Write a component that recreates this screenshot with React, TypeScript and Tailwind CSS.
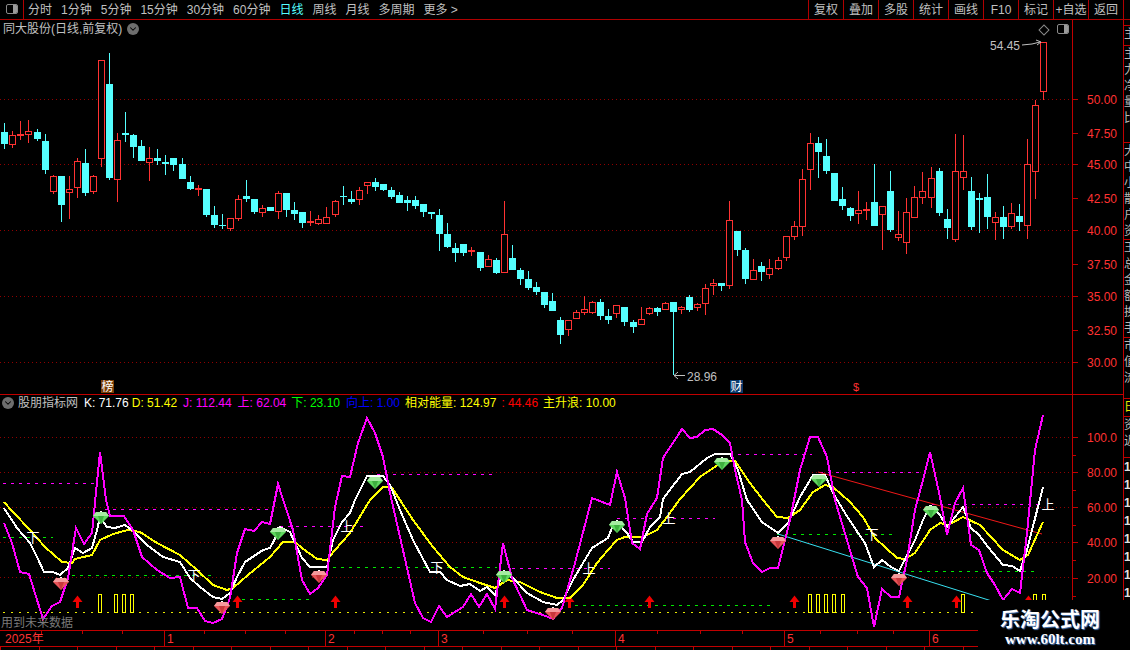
import { ChevronDown } from 'lucide-react';

// [high, bodyTop, bodyBottom, low, red?1:0], page pixels, one entry per trading day
const candles: number[][] = [
  [123, 132, 144, 149, 0], [131, 135, 145, 148, 1], [121, 134, 136, 140, 1], [120, 131, 135, 143, 1],
  [129, 132, 139, 141, 0], [134, 141, 170, 174, 0], [175, 176, 192, 194, 1], [176, 176, 205, 222, 0],
  [176, 189, 193, 219, 1], [158, 161, 188, 198, 1], [149, 163, 193, 196, 0], [175, 176, 192, 194, 1],
  [60, 60, 159, 167, 1], [53, 84, 178, 180, 0], [133, 140, 180, 202, 1], [112, 133, 135, 142, 0],
  [134, 135, 147, 158, 0], [140, 146, 161, 161, 0], [147, 158, 163, 181, 1], [149, 158, 161, 165, 0],
  [155, 162, 164, 175, 0], [158, 158, 165, 171, 0], [158, 164, 179, 179, 0], [176, 182, 189, 190, 0],
  [185, 188, 190, 196, 1], [189, 189, 215, 217, 0], [206, 215, 225, 228, 0], [214, 225, 226, 229, 0],
  [218, 218, 229, 231, 1], [195, 199, 219, 221, 1], [180, 196, 199, 202, 0], [199, 199, 212, 214, 0],
  [205, 208, 213, 217, 1], [207, 207, 211, 211, 0], [191, 193, 212, 219, 1], [193, 193, 210, 217, 0],
  [202, 210, 214, 220, 0], [212, 212, 223, 228, 0], [211, 221, 223, 226, 1], [215, 219, 224, 225, 1],
  [207, 217, 224, 224, 1], [200, 201, 215, 217, 1], [186, 196, 197, 205, 0], [191, 199, 202, 204, 0],
  [187, 190, 200, 205, 1], [182, 182, 186, 194, 1], [178, 182, 187, 191, 0], [184, 184, 190, 191, 0],
  [187, 190, 197, 199, 0], [192, 195, 203, 203, 0], [196, 200, 203, 211, 0], [196, 200, 206, 209, 0],
  [204, 204, 212, 217, 0], [212, 212, 214, 219, 0], [209, 215, 234, 251, 0], [223, 234, 247, 248, 0],
  [243, 248, 253, 262, 0], [244, 244, 253, 256, 0], [247, 250, 252, 256, 1], [252, 252, 268, 271, 0],
  [255, 259, 267, 267, 1], [258, 260, 273, 274, 0], [201, 234, 273, 273, 1], [245, 258, 270, 270, 0],
  [268, 270, 279, 285, 0], [271, 279, 288, 290, 0], [282, 287, 292, 295, 0], [292, 292, 305, 308, 0],
  [293, 301, 311, 311, 0], [317, 320, 335, 344, 0], [320, 320, 330, 336, 1], [310, 312, 319, 319, 1],
  [296, 309, 313, 315, 1], [301, 302, 313, 314, 1], [299, 302, 316, 320, 0], [309, 316, 320, 324, 0],
  [305, 305, 314, 318, 1], [307, 307, 322, 326, 0], [320, 322, 327, 333, 0], [307, 319, 325, 325, 1],
  [307, 308, 314, 315, 1], [307, 308, 312, 316, 0], [302, 303, 310, 310, 1], [302, 302, 312, 375, 0],
  [306, 307, 310, 314, 1], [295, 297, 310, 312, 0], [303, 304, 308, 311, 1], [284, 288, 304, 315, 1],
  [279, 283, 286, 295, 1], [283, 283, 286, 291, 0], [201, 220, 286, 289, 1], [231, 231, 250, 256, 0],
  [248, 250, 279, 284, 0], [259, 270, 280, 280, 1], [262, 266, 272, 281, 0], [259, 268, 275, 279, 1],
  [257, 260, 269, 270, 1], [236, 236, 258, 261, 1], [221, 226, 237, 240, 1], [169, 179, 227, 236, 1],
  [133, 143, 170, 190, 1], [137, 143, 152, 178, 0], [139, 156, 171, 174, 0], [173, 173, 201, 201, 0],
  [187, 199, 206, 210, 0], [207, 208, 216, 221, 0], [191, 210, 214, 224, 1], [202, 209, 211, 220, 1],
  [164, 202, 226, 226, 0], [206, 206, 215, 250, 1], [171, 191, 230, 232, 0], [211, 234, 238, 241, 1],
  [198, 212, 243, 254, 1], [186, 197, 218, 218, 1], [172, 191, 198, 204, 1], [167, 178, 198, 208, 1],
  [168, 171, 213, 216, 0], [209, 219, 228, 239, 0], [134, 171, 240, 242, 1], [135, 171, 178, 190, 1],
  [177, 191, 227, 230, 0], [193, 198, 200, 233, 0], [174, 197, 217, 229, 0], [212, 217, 223, 240, 1],
  [206, 217, 227, 239, 0], [203, 213, 227, 229, 1], [204, 216, 222, 231, 0], [139, 164, 226, 239, 1],
  [100, 105, 172, 199, 1], [42, 42, 92, 100, 1],
];

const linePoints = {
  j: '4,523 12,543 20,572 29,574 43,619 52,606 60,602 68,578 76,528 84,544 92,533 100,452 106,500 110,516 124,516 133,530 142,557 157,570 170,578 180,577 188,608 197,608 205,621 213,623 222,619 230,598 237,553 245,529 254,531 262,522 270,524 278,484 293,530 302,580 310,594 318,588 327,575 335,507 342,476 350,477 358,443 367,418 375,433 383,457 390,493 400,537 415,603 423,618 431,622 439,606 447,617 463,607 471,594 479,607 487,594 495,609 503,543 512,578 527,610 543,615 553,619 562,608 575,563 592,498 610,505 617,472 625,498 632,543 640,549 647,514 657,498 663,458 682,429 690,438 697,437 705,430 713,429 722,435 730,443 735,470 742,500 745,542 753,563 762,572 770,568 778,568 790,520 800,470 810,437 818,437 827,457 835,500 852,557 858,577 867,588 874,627 882,589 891,597 899,597 907,560 915,510 923,480 930,452 940,497 947,535 955,503 963,488 971,545 979,550 987,573 995,585 1003,600 1012,589 1020,593 1027,533 1035,450 1043,415',
  k: '4,508 17,528 30,543 37,557 44,572 53,572 60,575 68,568 75,548 83,553 92,548 97,530 100,517 107,527 115,528 125,525 133,531 147,545 163,557 180,562 190,578 200,587 213,597 222,599 230,593 237,577 245,562 263,550 270,548 278,533 280,527 290,532 302,558 310,567 327,567 333,540 342,522 350,513 355,500 367,476 383,476 390,485 400,510 413,540 422,557 430,572 440,572 447,580 460,586 470,584 480,591 487,587 495,595 503,572 513,578 527,593 543,602 557,605 563,600 573,580 583,563 592,548 608,538 613,525 618,523 627,533 633,542 642,542 650,527 660,517 663,499 682,474 690,472 707,458 715,454 730,454 738,470 747,500 762,522 778,533 788,523 800,497 813,475 825,475 833,493 845,513 858,533 865,543 874,567 882,560 891,567 899,571 915,540 923,520 930,506 940,515 947,527 963,507 971,528 979,535 988,547 1003,565 1012,566 1020,571 1027,550 1043,487',
  d: '4,502 13,512 30,530 45,547 62,562 72,563 75,559 92,555 100,540 113,534 128,530 140,532 157,543 180,555 197,570 213,585 227,590 233,588 248,575 270,557 283,542 295,542 302,548 317,559 327,560 335,550 350,533 370,500 383,487 392,488 400,500 413,520 433,547 450,567 463,577 480,583 495,588 507,580 520,582 540,592 557,598 570,598 583,585 597,563 608,550 617,540 625,537 643,537 657,530 667,517 680,499 700,477 722,462 735,461 750,483 763,500 777,517 788,518 800,510 813,492 825,485 833,487 850,502 863,517 875,538 897,558 905,559 915,553 930,530 940,523 948,525 963,517 980,525 1003,550 1020,560 1028,555 1043,522',
};

const magentaDashes = [[3, 95, 483], [105, 272, 509], [280, 368, 526], [377, 497, 474], [512, 610, 568], [617, 715, 518], [722, 812, 454], [820, 925, 472], [932, 1040, 504]];
const greenDashes = [[3, 53, 537], [72, 215, 575], [242, 312, 599], [317, 400, 567], [407, 497, 567], [575, 770, 605], [777, 893, 534], [903, 1037, 571]];
const greenGems = [[101, 517], [278, 533], [375, 482], [504, 576], [617, 526], [722, 463], [819, 480], [931, 511]];
const redGems = [[61, 583], [222, 607], [319, 576], [553, 613], [778, 542], [899, 579]];
const redArrows = [77, 237, 335, 504, 569, 649, 794, 907, 956, 1028];
const yellowBars = [100, 116, 124, 132, 810, 818, 826, 834, 843, 963, 1035, 1044];
const signLabels: [string, number, number][] = [
  ['下', 33, 537], ['下', 194, 575], ['下', 437, 567], ['下', 872, 534],
  ['上', 347, 526], ['上', 589, 568], ['上', 669, 518], ['上', 1048, 504],
];
const priceLabels: [string, number][] = [['50.00', 99], ['47.50', 133], ['45.00', 164], ['42.50', 198], ['40.00', 230], ['37.50', 264], ['35.00', 296], ['32.50', 330], ['30.00', 362]];
const indicatorLabels: [string, number][] = [['100.0', 437], ['80.00', 472], ['60.00', 507], ['40.00', 542], ['20.00', 578]];
const monthTicks: [string, number][] = [['1', 164], ['2', 325], ['3', 438], ['4', 615], ['5', 784], ['6', 929]];
const minorTicks = [41, 82, 122, 204, 245, 285, 354, 382, 410, 483, 527, 572, 657, 700, 742, 820, 857, 893];

function Candle({ data, index }: { data: number[]; index: number }) {
  const [high, top, bottom, low, red] = data;
  const cx = Math.round(4.33 + 8.054 * index);
  const color = red ? '#ff3232' : '#55ffff';
  return (
    <g shapeRendering="crispEdges">
      <rect x={cx} y={high} width={1} height={Math.max(0, top - high)} fill={color} />
      <rect x={cx} y={bottom} width={1} height={Math.max(0, low - bottom)} fill={color} />
      {red ? (
        <rect x={cx - 2.5} y={top + 0.5} width={6} height={Math.max(1, bottom - top - 1)} fill="black" stroke={color} />
      ) : (
        <rect x={cx - 3} y={top} width={7} height={Math.max(1, bottom - top)} fill={color} />
      )}
    </g>
  );
}

function Gem({ x, y, tone }: { x: number; y: number; tone: 'green' | 'red' }) {
  const c = tone === 'green'
    ? { main: '#5fd85f', light: '#a4eca0', dark: '#3fb040' }
    : { main: '#e85458', light: '#f59a9c', dark: '#c8383c' };
  return (
    <g transform={`translate(${x} ${y})`}>
      <polygon points="-5,-5 5,-5 8,-1 0,7 -8,-1" fill={c.main} />
      <polygon points="-5,-5 5,-5 8,-1 -8,-1" fill={c.light} />
      <polygon points="-3,-1 3,-1 0,7" fill={c.dark} />
      <rect x={-1} y={-6} width={2} height={1} fill="white" />
    </g>
  );
}

function PriceChart() {
  return (
    <svg width={1072} height={374} viewBox="0 20 1072 374" className="block">
      {[99.5, 164.5, 230.5, 296.5, 362.5].map((y) => (
        <line key={y} x1={0} x2={1072} y1={y} y2={y} stroke="#900000" strokeDasharray="1 3" shapeRendering="crispEdges" />
      ))}
      {candles.map((c, i) => (
        <Candle key={i} data={c} index={i} />
      ))}
      <text x={990} y={50} fontSize={12} fill="#c0c0c0">54.45</text>
      <polyline points="1022,45 1032,44 1040,42" fill="none" stroke="#c0c0c0" />
      <polyline points="1036,40 1041,42 1037,45" fill="none" stroke="#c0c0c0" />
      <line x1={674} x2={685} y1={375.5} y2={375.5} stroke="#c0c0c0" shapeRendering="crispEdges" />
      <polyline points="678,372 674,375.5 678,379" fill="none" stroke="#c0c0c0" />
      <text x={687} y={381} fontSize={12} fill="#c0c0c0">28.96</text>
      <rect x={101} y={380} width={13} height={13} fill="#7a3e08" />
      <text x={107.5} y={391} fontSize={12} fill="white" textAnchor="middle">榜</text>
      <rect x={730} y={380} width={13} height={13} fill="#0a3a6e" />
      <text x={736.5} y={391} fontSize={12} fill="white" textAnchor="middle">财</text>
      <text x={856} y={391} fontSize={11} fill="#ff3232" textAnchor="middle">$</text>
    </svg>
  );
}

function IndicatorChart() {
  return (
    <svg width={1072} height={235} viewBox="0 395 1072 235" className="block">
      {[437.5, 472.5, 507.5, 542.5, 577.5].map((y) => (
        <line key={y} x1={0} x2={1072} y1={y} y2={y} stroke="#900000" strokeDasharray="1 3" shapeRendering="crispEdges" />
      ))}
      <line x1={3} x2={978} y1={612.5} y2={612.5} stroke="#e8e800" strokeDasharray="2 6" shapeRendering="crispEdges" />
      {magentaDashes.map(([a, b, y]) => (
        <line key={a} x1={a} x2={b} y1={y + 0.5} y2={y + 0.5} stroke="#ff00ff" strokeDasharray="3 5" shapeRendering="crispEdges" />
      ))}
      {greenDashes.map(([a, b, y]) => (
        <line key={a} x1={a} x2={b} y1={y + 0.5} y2={y + 0.5} stroke="#00e800" strokeDasharray="3 5" shapeRendering="crispEdges" />
      ))}
      {yellowBars.map((x) => (
        <rect key={x} x={x - 1.5} y={594.5} width={3} height={18} fill="none" stroke="#ffff00" shapeRendering="crispEdges" />
      ))}
      {redArrows.map((x) => (
        <g key={x} fill="#f00000">
          <polygon points={`${x + 0.5},595.5 ${x + 5.5},602 ${x - 4.5},602`} />
          <rect x={x - 1} y={602} width={3} height={6} />
        </g>
      ))}
      <line x1={778} y1={534} x2={995} y2={602} stroke="#38e0f0" />
      <line x1={818} y1={472} x2={1042} y2={534} stroke="#f01818" />
      <polyline points={linePoints.d} fill="none" stroke="#ffff00" strokeWidth={2} shapeRendering="crispEdges" />
      <polyline points={linePoints.k} fill="none" stroke="white" strokeWidth={2} shapeRendering="crispEdges" />
      <polyline points={linePoints.j} fill="none" stroke="#ff00ff" strokeWidth={2} shapeRendering="crispEdges" />
      {signLabels.map(([t, x, y]) => (
        <text key={x} x={x} y={y + 5} fontSize={13} fill="white" textAnchor="middle">{t}</text>
      ))}
      {greenGems.map(([x, y]) => (
        <Gem key={x} x={x} y={y} tone="green" />
      ))}
      {redGems.map(([x, y]) => (
        <Gem key={x} x={x} y={y} tone="red" />
      ))}
    </svg>
  );
}

function Axis({ labels, top, height, minor }: { labels: [string, number][]; top: number; height: number; minor?: boolean }) {
  return (
    <svg width={50} height={height} viewBox={`1074 ${top} 50 ${height}`} className="block">
      {labels.map(([text, y]) => (
        <g key={text}>
          <line x1={1074} x2={1079} y1={y + 0.5} y2={y + 0.5} stroke="#c00000" shapeRendering="crispEdges" />
          {minor && <line x1={1074} x2={1077} y1={y + 18} y2={y + 18} stroke="#c00000" shapeRendering="crispEdges" />}
          <text x={1088} y={y + 5} fontSize={12} fill="#ff3232">{text}</text>
        </g>
      ))}
    </svg>
  );
}

function TimeAxis() {
  return (
    <svg width={1130} height={19} viewBox="0 631 1130 19" className="block">
      <text x={5} y={643} fontSize={12} fill="#ff3232">2025年</text>
      {monthTicks.map(([t, x]) => (
        <g key={t}>
          <line x1={x + 0.5} x2={x + 0.5} y1={631} y2={646} stroke="#c00000" shapeRendering="crispEdges" />
          <text x={x + 3} y={643} fontSize={12} fill="#ff3232">{t}</text>
        </g>
      ))}
      {minorTicks.map((x) => (
        <line key={x} x1={x + 0.5} x2={x + 0.5} y1={631} y2={634} stroke="#c00000" shapeRendering="crispEdges" />
      ))}
      <line x1={0} x2={1130} y1={646.5} y2={646.5} stroke="#c00000" shapeRendering="crispEdges" />
      {Array.from({ length: 26 }, (_, i) => (
        <line key={i} x1={i * 38.5 + 0.5} x2={i * 38.5 + 0.5} y1={647} y2={650} stroke="#c00000" shapeRendering="crispEdges" />
      ))}
    </svg>
  );
}

function SideRows({ chars, height, className = 'text-[#b8b8b8] leading-[16px]' }: { chars: string; height: number; className?: string }) {
  return (
    <div style={{ height }} className={`border-t border-[#c00000] overflow-hidden text-[12px] whitespace-nowrap ${className}`}>
      {chars.split('').map((c, i) => (
        <div key={i}>{c}</div>
      ))}
    </div>
  );
}

function ToolIcon() {
  return (
    <div className="flex w-[12px] h-[10px] rounded-[2px] border border-[#8a8a8a]">
      <div className="w-[6px]" />
      <div className="flex-1 bg-[#9a9a9a] rounded-r-[1px]" />
    </div>
  );
}

export default function App() {
  const periods = ['分时', '1分钟', '5分钟', '15分钟', '30分钟', '60分钟'];
  const periods2 = ['周线', '月线', '多周期', '更多 >'];
  const tabs = ['复权', '叠加', '多股', '统计', '画线', 'F10', '标记', '+自选', '返回'];

  return (
    <div className="relative w-[1130px] h-[650px] bg-black overflow-hidden text-[12px] leading-[16px] text-[#c0c0c0] font-['Liberation_Sans','Noto_Sans_CJK_SC',sans-serif]">
      <header className="flex h-[20px] border-b border-[#b00000]">
        <div className="flex w-[24px] items-center justify-center border-r border-[#b00000] pb-[1px]">
          <ToolIcon />
        </div>
        <nav className="flex items-center gap-[9px] pl-[4px]">
          {periods.map((p) => (
            <span key={p}>{p}</span>
          ))}
          <span className="text-[#55ffff]">日线</span>
          {periods2.map((p) => (
            <span key={p}>{p}</span>
          ))}
        </nav>
        <div className="ml-auto mr-[6px] flex">
          {tabs.map((t) => (
            <div key={t} className="flex w-[35px] items-center justify-center border-l border-[#b00000] last:w-[36px] last:border-r">
              {t}
            </div>
          ))}
        </div>
      </header>

      <div className="flex h-[610px]">
        <div className="w-[1072px] shrink-0">
          <section className="relative h-[375px] border-b border-[#c00000]">
            <PriceChart />
            <div className="absolute left-[3px] top-[1px] flex items-center gap-[5px]">
              <span>同大股份(日线,前复权)</span>
              <span className="flex h-[12px] w-[12px] items-center justify-center rounded-full bg-[#6e6e6e]">
                <ChevronDown size={10} strokeWidth={2.5} className="text-black" />
              </span>
            </div>
          </section>
          <section className="relative h-[235px]">
            <IndicatorChart />
            <div className="absolute left-[2px] top-[0px] flex items-center whitespace-nowrap">
              <span className="mr-[4px] flex h-[12px] w-[12px] items-center justify-center rounded-full bg-[#6e6e6e]">
                <ChevronDown size={10} strokeWidth={2.5} className="text-black" />
              </span>
              <span className="mr-[6px]">股朋指标网</span>
              <span className="mr-[3px] text-white">K: 71.76</span>
              <span className="mr-[6px] text-[#ffff00]">D: 51.42</span>
              <span className="mr-[6px] text-[#ff00ff]">J: 112.44</span>
              <span className="mr-[5px] text-[#ff00ff]">上: 62.04</span>
              <span className="mr-[6px] text-[#00ff00]">下: 23.10</span>
              <span className="mr-[5px] text-[#0000ff]">向上: 1.00</span>
              <span className="mr-[5px] text-[#ffff00]">相对能量: 124.97</span>
              <span className="mr-[5px] text-[#ff0000]">: 44.46</span>
              <span className="text-[#ffff00]">主升浪: 10.00</span>
            </div>
          </section>
        </div>

        <div className="w-[52px] shrink-0 border-x border-[#c00000]">
          <div className="relative h-[375px] border-b border-[#c00000]">
            <Axis labels={priceLabels} top={20} height={374} />
            <div className="absolute left-[-33px] top-[6px] h-[8px] w-[8px] rotate-45 border border-[#8a8a8a]" />
          </div>
          <Axis labels={indicatorLabels} top={395} height={235} minor />
        </div>

        <aside className="w-[6px] overflow-hidden">
          <div className="h-[5px]" />
          <SideRows chars="主" height={20} />
          <SideRows chars="主力净量比" height={97} />
          <SideRows chars="大中小散户资" height={97} />
          <SideRows chars="王总金额换手" height={98} />
          <SideRows chars="市值流" height={61} />
          <SideRows chars="日" height={18} className="text-[#e8e800] leading-[16px]" />
          <SideRows chars="资近" height={41} />
          <SideRows chars="11111111" height={143} className="font-bold text-[#e0e0e0] leading-[18px]" />
        </aside>
      </div>

      <div className="border-t border-[#c00000]">
        <TimeAxis />
      </div>

      <div className="absolute left-[1px] top-[615px] text-[#7a7a7a]">用到未来数据</div>
      <div className="absolute left-[1057px] top-[24px]">
        <ToolIcon />
      </div>

      <div className="absolute bottom-0 right-0 flex h-[50px] w-[152px] flex-col items-center bg-black pr-[8px] pt-[9px] font-bold text-white [text-shadow:1px_1px_1px_#4a7ab8]">
        <div className="text-[20px] leading-[22px]">乐淘公式网</div>
        <div className="font-['Liberation_Serif',serif] text-[15px] leading-[16px]">www.60lt.com</div>
      </div>
    </div>
  );
}
